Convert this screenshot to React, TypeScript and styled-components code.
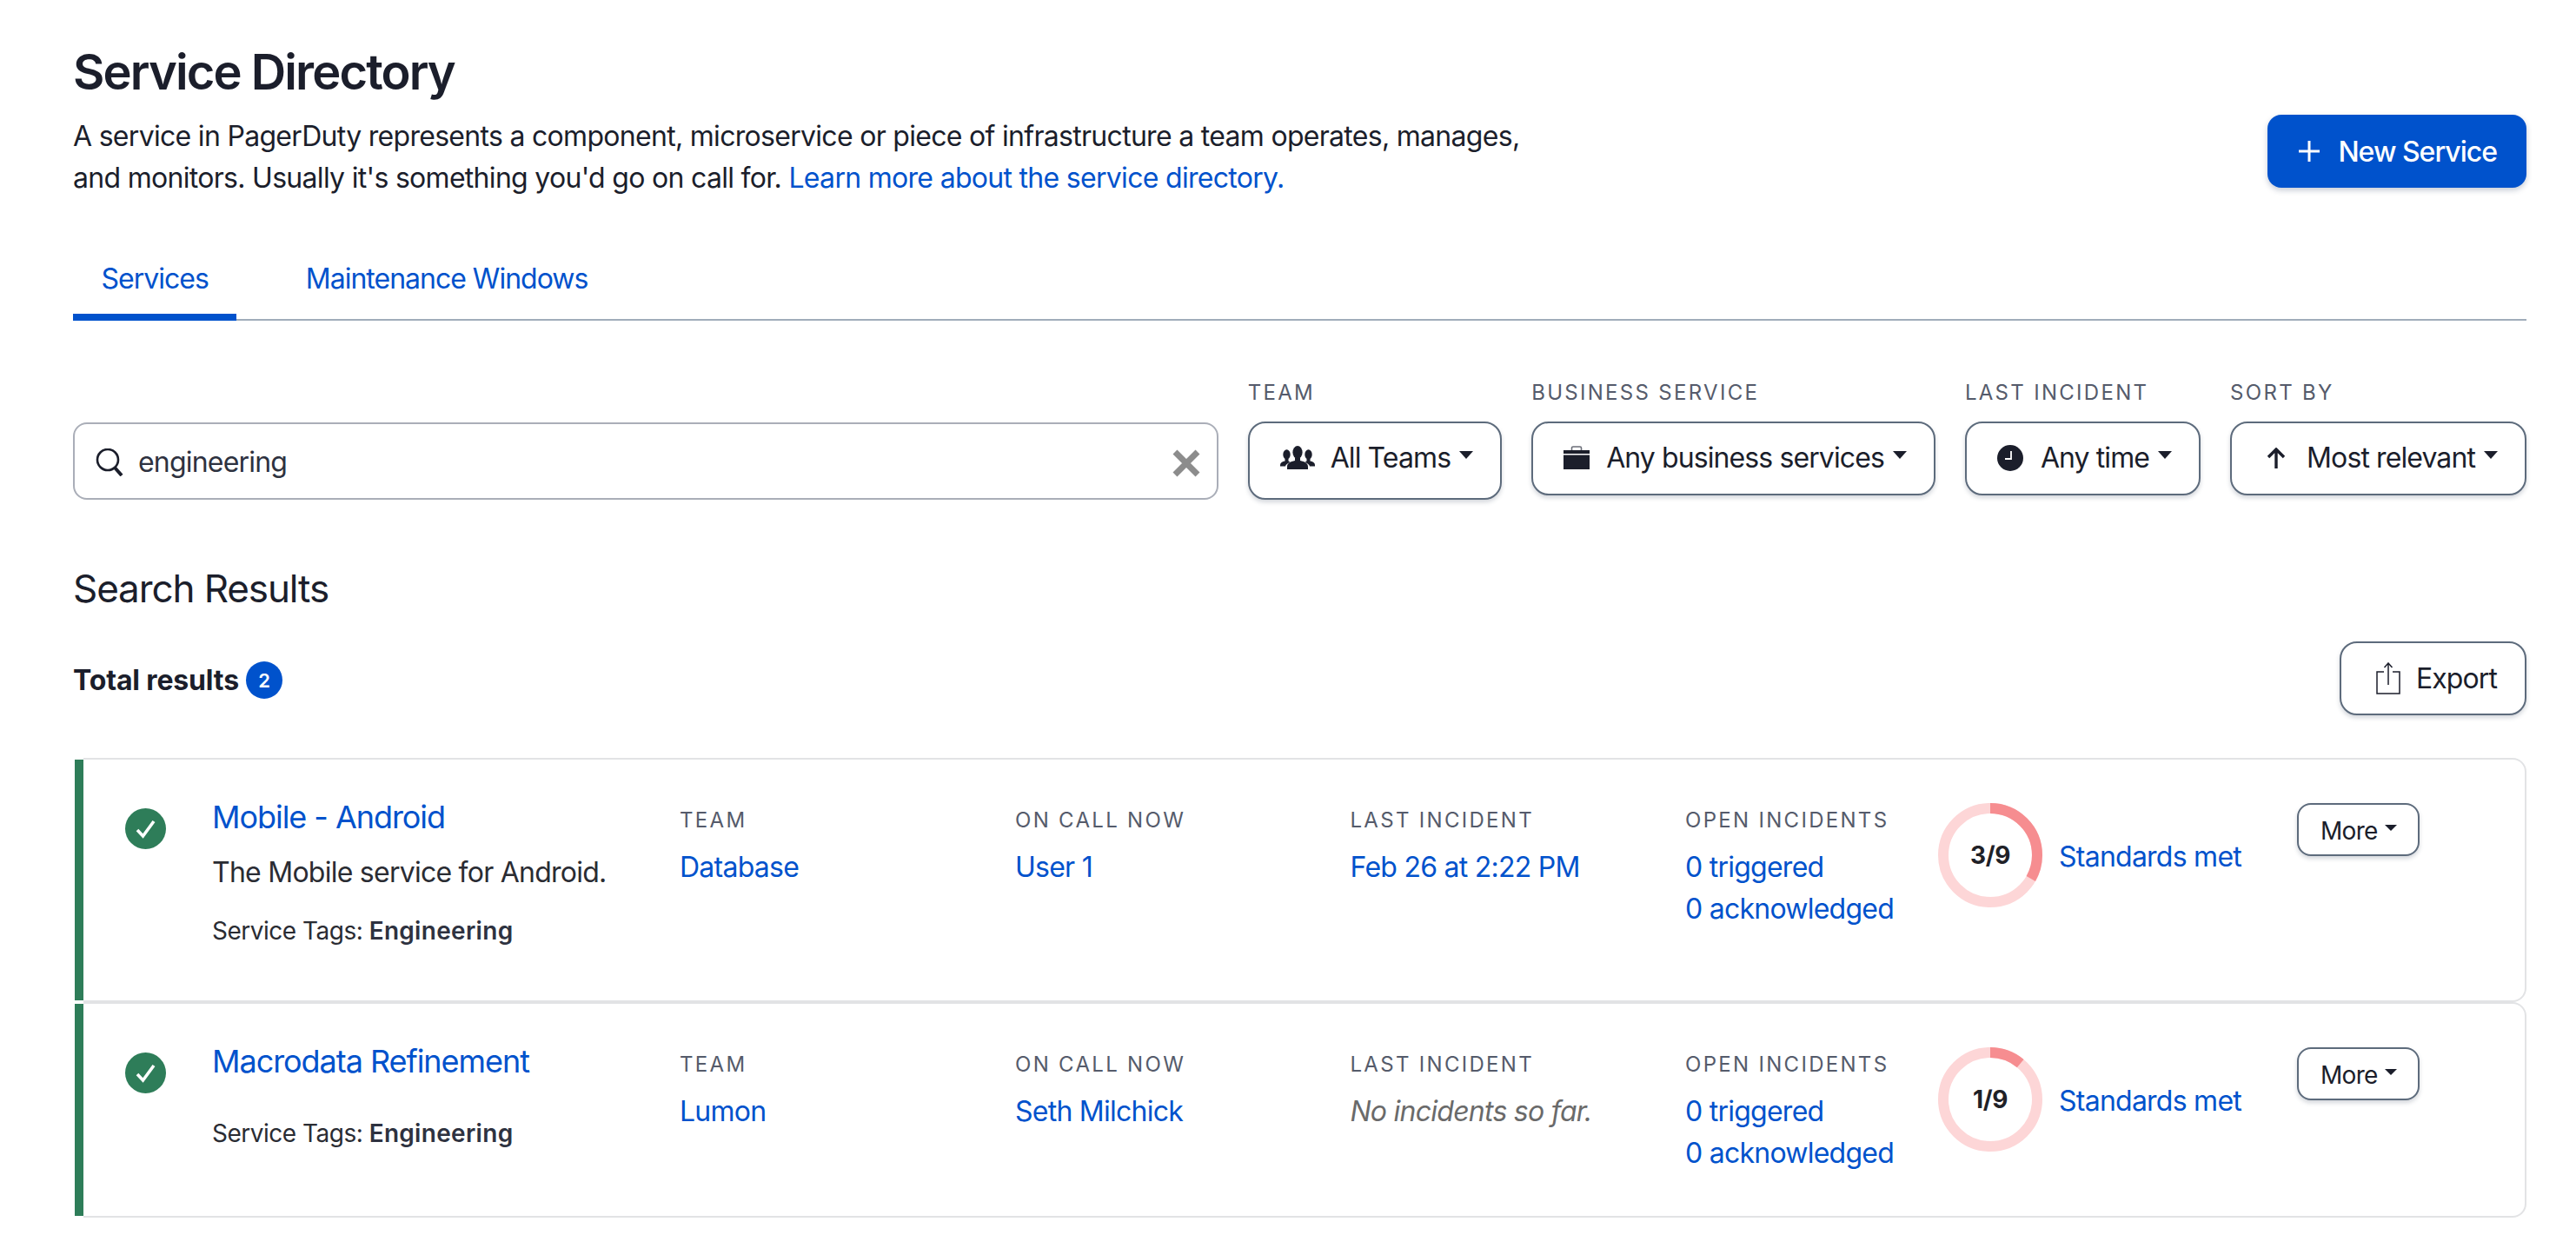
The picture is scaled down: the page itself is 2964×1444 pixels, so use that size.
import styled, { createGlobalStyle } from "styled-components";

const GlobalStyle = createGlobalStyle`
  body {
    margin: 0;
    background: #ffffff;
    color: #1b1e2b;
    font-family: Inter, "Liberation Sans", sans-serif;
  }
`;

const Page = styled.div`
  padding: 51px 57px 0 84px;
`;

const Header = styled.header`
  display: flex;
  justify-content: space-between;
  align-items: flex-end;
`;

const Title = styled.h1`
  margin: 0 0 18px;
  font-size: 56px;
  line-height: 64px;
  font-weight: 600;
  letter-spacing: -1.9px;
`;

const Intro = styled.p`
  margin: 0;
  width: 1680px;
  font-size: 32px;
  line-height: 48px;
  letter-spacing: -0.7px;
`;

const Link = styled.a`
  color: #0052cc;
  text-decoration: none;
`;

const PrimaryButton = styled.button`
  display: flex;
  align-items: center;
  gap: 20px;
  height: 84px;
  margin-bottom: 13px;
  padding: 0 34px 0 35px;
  border: 0;
  border-radius: 16px;
  background: #0052cc;
  box-shadow: 0 3px 6px rgba(30, 50, 90, 0.25);
  color: #ffffff;
  font: 500 32px Inter, sans-serif;
  letter-spacing: -1px;
`;

const Tabs = styled.nav`
  display: flex;
  gap: 47px;
  margin-top: 64px;
  border-bottom: 2px solid #a0adba;
`;

const Tab = styled.a<{ $active?: boolean }>`
  height: 76px;
  padding: 0 32.5px;
  margin-bottom: -2px;
  border-bottom: 8px solid ${({ $active }) => ($active ? "#0052cc" : "transparent")};
  box-sizing: border-box;
  color: #0052cc;
  font-size: 32px;
  line-height: 56px;
  letter-spacing: -1px;
`;

const FilterRow = styled.section`
  display: flex;
  gap: 34px;
  margin-top: 68px;
  align-items: flex-start;
`;

const SearchBox = styled.div`
  display: flex;
  flex: 1;
  align-items: center;
  gap: 17px;
  height: 89px;
  margin-top: 49px;
  padding: 2px 19px 0 24px;
  box-sizing: border-box;
  border: 2px solid #aaaeb8;
  border-radius: 16px;
  font-size: 32px;
  letter-spacing: -0.8px;
  color: #2e3240;
`;

const SearchText = styled.span`
  flex: 1;
`;

const Filter = styled.div`
  display: flex;
  flex-direction: column;
`;

const Label = styled.div`
  height: 48px;
  font-size: 24px;
  line-height: 30px;
  letter-spacing: 2.3px;
  color: #555b6b;
  white-space: nowrap;
`;

const SelectButton = styled.button<{ $tall?: boolean; $pad?: number }>`
  display: flex;
  align-items: center;
  height: ${({ $tall }) => ($tall ? 90 : 85)}px;
  padding: 0 31px ${({ $tall }) => ($tall ? 7 : 2)}px ${({ $pad }) => $pad ?? 35}px;
  background: #ffffff;
  border: 2px solid #5d6b7c;
  border-radius: 20px;
  box-shadow: 0 3px 5px rgba(60, 75, 95, 0.22);
  color: #1b1e2b;
  font: 400 32px Inter, sans-serif;
  letter-spacing: -0.9px;
  white-space: nowrap;
`;

const IconSlot = styled.span<{ $gap: number }>`
  display: flex;
  margin-right: ${({ $gap }) => $gap}px;
  color: #1b1e2b;
`;

const Caret = styled.span<{ $small?: boolean }>`
  width: 0;
  height: 0;
  margin-left: ${({ $small }) => ($small ? 8 : 10)}px;
  margin-top: -6px;
  border-left: ${({ $small }) => ($small ? 7 : 8.5)}px solid transparent;
  border-right: ${({ $small }) => ($small ? 7 : 8.5)}px solid transparent;
  border-top: ${({ $small }) => ($small ? 7 : 9)}px solid #1b1e2b;
`;

const SectionTitle = styled.h2`
  margin: 74px 0 0;
  font-size: 44px;
  line-height: 56px;
  font-weight: 400;
  letter-spacing: -1.1px;
`;

const TotalRow = styled.div`
  display: flex;
  justify-content: space-between;
  align-items: center;
  margin-top: 33px;
`;

const Total = styled.div`
  display: flex;
  align-items: center;
  gap: 8px;
  margin-top: 4px;
  font-size: 32px;
  font-weight: 700;
  letter-spacing: -0.15px;
`;

const Badge = styled.span`
  display: flex;
  justify-content: center;
  align-items: center;
  width: 42px;
  height: 43px;
  border-radius: 50%;
  background: #0052cc;
  color: #ffffff;
  font-size: 22px;
  font-weight: 600;
`;

const ExportButton = styled(SelectButton)`
  gap: 18px;
  padding: 0 32px 0 40px;
`;

const Results = styled.section`
  margin: 49px 0 0 2px;
`;

const Card = styled.article`
  display: flex;
`;

const StatusBar = styled.div`
  flex: none;
  width: 10px;
  background: #2e7d59;
  margin: 2px 0;
`;

const CardBody = styled.div`
  flex: 1;
  display: grid;
  grid-template-columns: 100px 538px 386px 385.5px 385.5px 291px 413px 1fr;
  padding: 50px 0 48px 48px;
  border: 2px solid #e2e3e5;
  border-left: 0;
  border-radius: 0 16px 16px 0;
`;

const StatusDot = styled.span`
  display: flex;
  justify-content: center;
  align-items: center;
  width: 47px;
  height: 47px;
  margin-top: 6px;
  border-radius: 50%;
  background: #2e7d59;
`;

const ServiceName = styled.a`
  display: block;
  color: #0052cc;
  font-size: 36px;
  line-height: 32px;
  letter-spacing: -1.05px;
`;

const Description = styled.div`
  margin-top: 24px;
  font-size: 32px;
  line-height: 48px;
  letter-spacing: -0.75px;
  color: #2a2c33;
`;

const Tags = styled.div<{ $spaced?: boolean }>`
  margin-top: ${({ $spaced }) => ($spaced ? 47 : 23)}px;
  margin-bottom: ${({ $spaced }) => ($spaced ? 0 : 12)}px;
  font-size: 28px;
  line-height: 40px;
  letter-spacing: -0.5px;
  color: #2a2c33;
`;

const Strong = styled.b`
  font-weight: 600;
  letter-spacing: 0.3px;
  color: #2e3240;
`;

const Column = styled.div`
  padding-top: 5px;
`;

const ColumnLabel = styled.div`
  margin-bottom: 15px;
  font-size: 24px;
  line-height: 30px;
  letter-spacing: 2.3px;
  color: #555b6b;
`;

const Value = styled.a`
  display: block;
  color: #0052cc;
  font-size: 32px;
  line-height: 48px;
  letter-spacing: -0.75px;
`;

const StandardsLink = styled(Value)`
  margin-top: 3px;
`;

const Muted = styled.div`
  color: #6a6a6a;
  font-size: 32px;
  line-height: 48px;
  font-style: italic;
  letter-spacing: -0.75px;
`;

const Standards = styled.div`
  display: flex;
  align-items: center;
  gap: 19px;
  height: 120px;
`;

const RingBox = styled.div`
  position: relative;
  flex: none;
  width: 120px;
  height: 120px;
`;

const RingLabel = styled.span`
  position: absolute;
  inset: 0;
  display: flex;
  justify-content: center;
  align-items: center;
  font-size: 28px;
  font-weight: 700;
  letter-spacing: -0.3px;
  color: #1f2127;
`;

const MoreButton = styled.button`
  display: flex;
  align-items: center;
  height: 61px;
  padding: 2px 24px 0 25px;
  background: #ffffff;
  border: 2px solid #5d6b7c;
  border-radius: 16px;
  box-shadow: 0 3px 5px rgba(60, 75, 95, 0.22);
  color: #1b1e2b;
  font: 400 28px Inter, sans-serif;
  letter-spacing: -0.7px;
`;

const Plus = () => (
  <svg width="26" height="26" viewBox="0 0 26 26">
    <path d="M13 1v24M1 13h24" stroke="#fff" strokeWidth="3" />
  </svg>
);

const SearchIcon = () => (
  <svg width="32" height="32" viewBox="0 0 32 32" fill="none" stroke="#1b1e2b">
    <circle cx="14" cy="13" r="12" strokeWidth="2.6" />
    <path d="M22 22l8 9" strokeWidth="4" />
  </svg>
);

const ClearSvg = styled.svg`
  margin-top: 2px;
`;

const ClearIcon = () => (
  <ClearSvg width="32" height="32" viewBox="0 0 32 32">
    <path d="M3 3l26 26M29 3L3 29" stroke="#8c8c8c" strokeWidth="7" />
  </ClearSvg>
);

const TeamIcon = () => (
  <svg width="40" height="27" viewBox="0 0 40 27" fill="#1b1e2b">
    <ellipse cx="20" cy="7.5" rx="5.6" ry="7.5" />
    <path d="M17 14h6v3c5 1 9 3 9 7v3H8v-3c0-4 4-6 9-7z" />
    <ellipse cx="7.5" cy="10" rx="4.2" ry="5.8" />
    <path d="M5.5 15h4v2.5c1 .5 1.6 1 2 1.5-3 1-5 2.5-5.5 4.5H0v-1.5c0-2.5 2.5-4 5.5-4.5z" />
    <ellipse cx="32.5" cy="10" rx="4.2" ry="5.8" />
    <path d="M34.5 15h-4v2.5c-1 .5-1.6 1-2 1.5 3 1 5 2.5 5.5 4.5h6v-1.5c0-2.5-2.5-4-5.5-4.5z" />
  </svg>
);

const BriefcaseIcon = () => (
  <svg width="30" height="27" viewBox="0 0 30 27">
    <path d="M9.5 5V2.5C9.5 1.6 10.2 1 11 1h8c.8 0 1.5.6 1.5 1.5V5" fill="none" stroke="#6b6e78" strokeWidth="1.6" />
    <path d="M0 5h30v4H0z" fill="#1b1e2b" />
    <path d="M0 10.5h30V27H0z" fill="#1b1e2b" />
  </svg>
);

const ClockIcon = () => (
  <svg width="30" height="30" viewBox="0 0 30 30">
    <circle cx="15" cy="15" r="15" fill="#1b1e2b" />
    <path d="M16 7v9H9" fill="none" stroke="#fff" strokeWidth="1.8" />
  </svg>
);

const ArrowIcon = () => (
  <svg width="22" height="24" viewBox="0 0 22 24" fill="none" stroke="#1b1e2b" strokeWidth="3.4">
    <path d="M11 24V3M2 11l9-9 9 9" />
  </svg>
);

const ExportIcon = () => (
  <svg width="28" height="37" viewBox="0 0 28 37" fill="none" stroke="#1b1e2b" strokeWidth="1.5">
    <path d="M9 11H1v25h26V11h-8M14 26V1M9.5 6L14 1l4.5 5" />
  </svg>
);

const CheckIcon = () => (
  <svg width="24" height="24" viewBox="0 0 24 24" fill="none" stroke="#fff" strokeWidth="3.6">
    <path d="M2 13l6.5 7L21 3" />
  </svg>
);

const Ring = ({ met }: { met: number }) => (
  <RingBox>
    <svg width="120" height="120" viewBox="0 0 120 120" fill="none" strokeWidth="12">
      <circle cx="60" cy="60" r="54" stroke="#fdd6d7" />
      <circle
        cx="60"
        cy="60"
        r="54"
        stroke="#f68d90"
        pathLength={9}
        strokeDasharray={`${met} ${9 - met}`}
        transform="rotate(-90 60 60)"
      />
    </svg>
    <RingLabel>{met}/9</RingLabel>
  </RingBox>
);

interface ServiceProps {
  name: string;
  description?: string;
  team: string;
  onCall: string;
  lastIncident?: string;
  met: number;
}

const ServiceCard = ({ name, description, team, onCall, lastIncident, met }: ServiceProps) => (
  <Card>
    <StatusBar />
    <CardBody>
      <div>
        <StatusDot>
          <CheckIcon />
        </StatusDot>
      </div>
      <div>
        <ServiceName>{name}</ServiceName>
        {description && <Description>{description}</Description>}
        <Tags $spaced={!description}>
          Service Tags: <Strong>Engineering</Strong>
        </Tags>
      </div>
      <Column>
        <ColumnLabel>TEAM</ColumnLabel>
        <Value>{team}</Value>
      </Column>
      <Column>
        <ColumnLabel>ON CALL NOW</ColumnLabel>
        <Value>{onCall}</Value>
      </Column>
      <Column>
        <ColumnLabel>LAST INCIDENT</ColumnLabel>
        {lastIncident ? <Value>{lastIncident}</Value> : <Muted>No incidents so far.</Muted>}
      </Column>
      <Column>
        <ColumnLabel>OPEN INCIDENTS</ColumnLabel>
        <Value>0 triggered</Value>
        <Value>0 acknowledged</Value>
      </Column>
      <Standards>
        <Ring met={met} />
        <StandardsLink>Standards met</StandardsLink>
      </Standards>
      <div>
        <MoreButton>
          More
          <Caret $small />
        </MoreButton>
      </div>
    </CardBody>
  </Card>
);

const App = () => {
  return (
    <Page>
      <GlobalStyle />
      <Header>
        <div>
          <Title>Service Directory</Title>
          <Intro>
            A service in PagerDuty represents a component, microservice or piece of infrastructure a team
            operates, manages, and monitors. Usually it's something you'd go on call for.{" "}
            <Link>Learn more about the service directory.</Link>
          </Intro>
        </div>
        <PrimaryButton>
          <Plus />
          New Service
        </PrimaryButton>
      </Header>

      <Tabs>
        <Tab $active>Services</Tab>
        <Tab>Maintenance Windows</Tab>
      </Tabs>

      <FilterRow>
        <SearchBox>
          <SearchIcon />
          <SearchText>engineering</SearchText>
          <ClearIcon />
        </SearchBox>
        <Filter>
          <Label>TEAM</Label>
          <SelectButton $tall>
            <IconSlot $gap={18}>
              <TeamIcon />
            </IconSlot>
            All Teams
            <Caret />
          </SelectButton>
        </Filter>
        <Filter>
          <Label>BUSINESS SERVICE</Label>
          <SelectButton>
            <IconSlot $gap={19}>
              <BriefcaseIcon />
            </IconSlot>
            Any business services
            <Caret />
          </SelectButton>
        </Filter>
        <Filter>
          <Label>LAST INCIDENT</Label>
          <SelectButton>
            <IconSlot $gap={20}>
              <ClockIcon />
            </IconSlot>
            Any time
            <Caret />
          </SelectButton>
        </Filter>
        <Filter>
          <Label>SORT BY</Label>
          <SelectButton $pad={40}>
            <IconSlot $gap={24}>
              <ArrowIcon />
            </IconSlot>
            Most relevant
            <Caret />
          </SelectButton>
        </Filter>
      </FilterRow>

      <SectionTitle>Search Results</SectionTitle>

      <TotalRow>
        <Total>
          Total results
          <Badge>2</Badge>
        </Total>
        <ExportButton>
          <ExportIcon />
          Export
        </ExportButton>
      </TotalRow>

      <Results>
        <ServiceCard
          name="Mobile - Android"
          description="The Mobile service for Android."
          team="Database"
          onCall="User 1"
          lastIncident="Feb 26 at 2:22 PM"
          met={3}
        />
        <ServiceCard name="Macrodata Refinement" team="Lumon" onCall="Seth Milchick" met={1} />
      </Results>
    </Page>
  );
};

export default App;
